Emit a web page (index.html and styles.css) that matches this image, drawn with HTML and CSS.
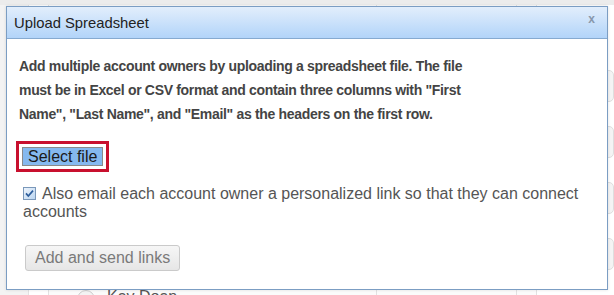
FILE: index.html
```html
<!DOCTYPE html>
<html>
<head>
<meta charset="utf-8">
<link rel="stylesheet" href="styles.css">
</head>
<body>
<div class="page">
  <div class="bg">
    <div class="col col-a"></div>
    <div class="col col-b"></div>
    <div class="col col-c">
      <div class="person"><span class="radio"></span><span class="pname">Kay Doan</span></div>
    </div>
    <div class="col col-d"></div>
    <div class="col col-e"></div>
    <div class="col col-f">
      <div class="pill"></div>
      <div class="pill"></div>
      <div class="pill"></div>
      <div class="pill"></div>
    </div>
  </div>

  <div class="dialog">
    <div class="dlg-head">
      <span class="dlg-title">Upload Spreadsheet</span>
      <span class="dlg-close">x</span>
    </div>
    <div class="dlg-body">
      <p class="intro">Add multiple account owners by uploading a spreadsheet file. The file must be in Excel or CSV format and contain three columns with "First Name", "Last Name", and "Email" as the headers on the first row.</p>
      <div class="select-wrap"><button class="btn-select">Select file</button></div>
      <label class="opt">
        <svg class="chk" width="13" height="13" viewBox="0 0 13 13">
          <defs>
            <linearGradient id="cg" x1="0" y1="0" x2="1" y2="1">
              <stop offset="0" stop-color="#eef5fd"/>
              <stop offset="1" stop-color="#b9d4f0"/>
            </linearGradient>
          </defs>
          <rect x="0.5" y="0.5" width="12" height="12" fill="url(#cg)" stroke="#7a98ba"/>
          <path d="M3 6.4 L5.3 9 L10 3.6" fill="none" stroke="#2c5d9c" stroke-width="1.7"/>
        </svg>Also email each account owner a personalized link so that they can connect accounts</label>
      <div class="actions"><button class="btn-send">Add and send links</button></div>
    </div>
  </div>
</div>
</body>
</html>
```

FILE: styles.css
```css
html, body {
  margin: 0;
  padding: 0;
}
body {
  font-family: "Liberation Sans", Arial, sans-serif;
  background: #ffffff;
}
.page {
  position: relative;
  width: 614px;
  height: 295px;
  overflow: hidden;
  background: #f6f6f6;
}

/* background page behind the dialog */
.bg {
  display: grid;
  grid-template-columns: 29px 20px 328px 140px 20px 1fr;
  height: 100%;
  border-top: 5px solid #ececec;
  box-sizing: border-box;
}
.col {
  border-right: 1px solid #e2e2e2;
  background: #fbfbfb;
}
.col-a { background: #f3f3f3; }
.col-b { background: #ffffff; }
.col-f {
  border-right: none;
  background: #ffffff;
  display: flex;
  flex-direction: column;
  gap: 24px;
  padding: 65px 0 0 1px;
}
.pill {
  height: 30px;
  border: 1px solid #dedede;
  border-radius: 5px;
  background: #f4f4f4;
}
.col-c {
  display: flex;
  flex-direction: column;
  justify-content: flex-end;
}
.person {
  display: flex;
  align-items: flex-start;
  gap: 12px;
  padding-left: 28px;
  margin-bottom: -15px;
  height: 22px;
}
.radio {
  width: 16px;
  height: 16px;
  border-radius: 50%;
  border: 1px solid #cfcfcf;
  background: #f3f3f3;
  margin-top: 2px;
}
.pname {
  font-size: 16px;
  color: #555;
  line-height: 18px;
}

/* dialog */
.dialog {
  position: absolute;
  left: 6px;
  top: 6px;
  width: 602px;
  height: 284px;
  box-sizing: border-box;
  border: 1px solid #7b9dc3;
  background: #ffffff;
  box-shadow: 0 0 3px rgba(0,0,0,0.12);
  display: flex;
  flex-direction: column;
}
.dlg-head {
  height: 31px;
  border-bottom: 1px solid #86aad0;
  background: linear-gradient(#e2eefc, #b2d4f9);
  display: flex;
  align-items: center;
  justify-content: space-between;
  padding: 0 12px 0 7px;
}
.dlg-title {
  font-size: 14.8px;
  color: #222;
  padding-top: 1px;
}
.dlg-close {
  font-size: 12px;
  font-weight: bold;
  color: #8897ab;
  align-self: flex-start;
  margin-top: 5px;
}
.dlg-body {
  padding: 15px 12px 0 12px;
}
.intro {
  margin: 0;
  width: 456px;
  font-size: 14px;
  letter-spacing: -0.32px;
  font-weight: bold;
  line-height: 24px;
  color: #444;
}
.select-wrap {
  margin-top: 21px;
  padding-left: 3px;
}
.btn-select {
  font-family: "Liberation Sans", Arial, sans-serif;
  font-size: 16px;
  line-height: 17px;
  height: 19px;
  padding: 0 5px;
  border: 1px solid #8a8a8a;
  background: #85b9ef;
  color: #1a1a1a;
  outline: 3px solid #c8102e;
  outline-offset: 3px;
  border-radius: 0;
  display: block;
}
.opt {
  display: block;
  margin-top: 19px;
  margin-left: 4px;
  font-size: 16px;
  line-height: 18px;
  color: #555;
}
.chk {
  vertical-align: -1px;
  margin-right: 6px;
}
.actions {
  margin-top: 24px;
  padding-left: 6px;
}
.btn-send {
  font-family: "Liberation Sans", Arial, sans-serif;
  font-size: 16px;
  height: 26px;
  padding: 0 9px;
  border: 1px solid #cacaca;
  border-radius: 3px;
  background: linear-gradient(#f6f6f6, #e6e6e6);
  color: #7a7a7a;
}
```
